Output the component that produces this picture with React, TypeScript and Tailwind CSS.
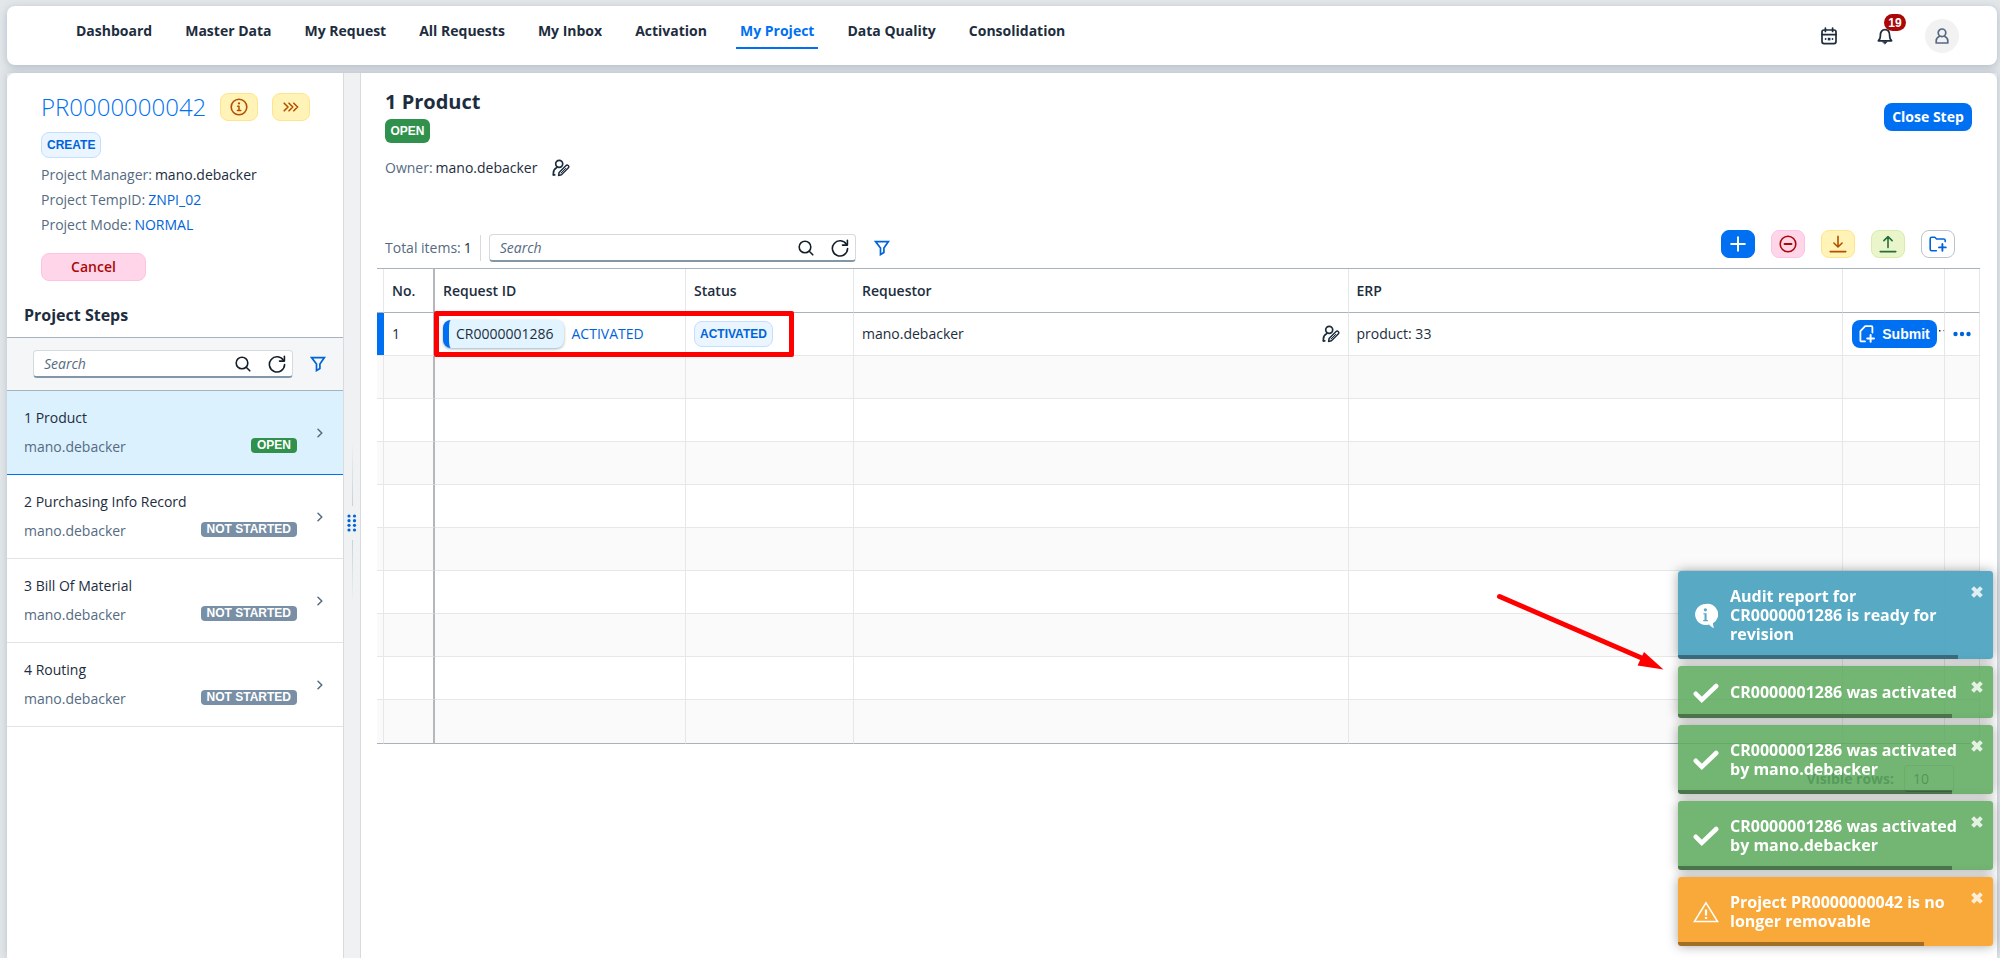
import React from "react";

type IconProps = { className?: string };

const stroke = {
  fill: "none",
  stroke: "currentColor",
  strokeWidth: 1.6,
  strokeLinecap: "round" as const,
  strokeLinejoin: "round" as const,
};

function SearchIcon({ className = "size-4" }: IconProps) {
  return (
    <svg viewBox="0 0 16 16" className={className} {...stroke}>
      <circle cx="7" cy="7" r="5.8" />
      <path d="M11.2 11.2l3.6 3.6" />
    </svg>
  );
}

function RefreshIcon({ className = "size-4.5" }: IconProps) {
  return (
    <svg viewBox="0 0 18 18" className={className} {...stroke}>
      <path d="M15.6 5.6A7.6 7.6 0 1 0 16.6 9.6" />
      <path d="M16.4 1.2v4.9h-4.9" />
    </svg>
  );
}

function FilterIcon({ className = "size-4" }: IconProps) {
  return (
    <svg viewBox="0 0 16 16" className={className} {...stroke} strokeLinejoin="miter" strokeWidth="1.7">
      <path d="M1.6 1.6h12.8L9.9 8v4.6L6.5 14.6V8z" />
    </svg>
  );
}

function InfoIcon() {
  return (
    <svg viewBox="0 0 18 18" className="size-4.5" {...stroke}>
      <circle cx="9" cy="9" r="7.8" />
      <path d="M7.6 8.2H9v4M7.4 12.4h3.4" strokeWidth="1.5" />
      <circle cx="9" cy="5.4" r="1.1" fill="currentColor" stroke="none" />
    </svg>
  );
}

function ChevronsIcon() {
  return (
    <svg viewBox="0 0 16 10" className="h-2.5 w-4" {...stroke}>
      <path d="M1.2 1.2L5 5 1.2 8.8M6 1.2L9.8 5 6 8.8M10.8 1.2L14.6 5l-3.8 3.8" />
    </svg>
  );
}

function UserEditIcon() {
  return (
    <svg viewBox="0 0 18 18" className="size-4.5" {...stroke} strokeWidth="1.7">
      <circle cx="7.2" cy="4.8" r="3.5" />
      <path d="M1.4 15.8v-1.9c0-2.3 1.2-4.2 3.2-5.2" />
      <path d="M1.400 15.800h1.400" />
      <path d="M6.600 16.400l.5-2.900 7-7a1.400 1.400 0 0 1 2 0l.3.3a1.400 1.400 0 0 1 0 2l-7 7z" strokeWidth="1.500" />
      <path d="M9 14l4.600-4.600" strokeWidth="1" />
    </svg>
  );
}

function CalendarIcon() {
  return (
    <svg viewBox="0 0 16 18" className="h-4.5 w-4" {...stroke} strokeWidth="1.700">
      <rect x="1" y="3" width="14" height="13.600" rx="2" />
      <path d="M4.400 1v3.400M11.600 1v3.400M1 7.600h14" />
      <rect x="6.800" y="10.800" width="2.600" height="2.600" fill="currentColor" stroke="none" />
      <circle cx="4.600" cy="12" r=".9" fill="currentColor" stroke="none" />
      <circle cx="11.500" cy="12" r=".9" fill="currentColor" stroke="none" />
    </svg>
  );
}

function BellIcon() {
  return (
    <svg viewBox="0 0 16 18" className="h-4.5 w-4" {...stroke} strokeWidth="1.700">
      <path d="M1.400 13.800c1.600-1.200 2-2.800 2-5.600 0-3.400 1.800-5.600 4.600-5.600s4.600 2.200 4.600 5.600c0 2.800.4 4.400 2 5.600z" />
      <path d="M5.800 14.800h4.400L8 17z" fill="currentColor" strokeWidth=".6" />
    </svg>
  );
}

function UserIcon() {
  return (
    <svg viewBox="0 0 14 16" className="h-4 w-3.5" {...stroke} strokeWidth="1.700">
      <circle cx="7" cy="4.800" r="3.800" />
      <path d="M4.600 8.200C2.600 9 1.200 10.600 1.200 12.800v2.200h11.600v-2.200c0-2.200-1.400-3.800-3.400-4.600" />
    </svg>
  );
}

function PlusIcon() {
  return (
    <svg viewBox="0 0 16 16" className="size-4" {...stroke} strokeWidth="2">
      <path d="M8 1.200v13.600M1.200 8h13.600" />
    </svg>
  );
}

function MinusCircleIcon() {
  return (
    <svg viewBox="0 0 18 18" className="size-4.5" {...stroke}>
      <circle cx="9" cy="9" r="7.800" />
      <path d="M5.500 9h7" strokeWidth="1.800" />
    </svg>
  );
}

function DownloadIcon() {
  return (
    <svg viewBox="0 0 18 18" className="size-4.5" {...stroke}>
      <path d="M9 1.200v10.600M4.900 8L9 12l4.100-4M1.200 16.600h15.600" />
    </svg>
  );
}

function UploadIcon() {
  return (
    <svg viewBox="0 0 18 18" className="size-4.5" {...stroke}>
      <path d="M9 12.600V1.600M4.900 5.600L9 1.600l4.100 4M1.200 16.600h15.600" />
    </svg>
  );
}

function FolderAddIcon() {
  return (
    <svg viewBox="0 0 18 16" className="h-4 w-4.5" {...stroke}>
      <path d="M7.400 14.800H2.800A1.600 1.600 0 0 1 1.200 13.200V2.800a1.600 1.600 0 0 1 1.600-1.600h3l1.800 1.800h7a1.600 1.600 0 0 1 1.600 1.600v1" />
      <path d="M13.400 8v6.800M10 11.400h6.800" strokeWidth="1.900" />
    </svg>
  );
}

function DocumentAddIcon() {
  return (
    <svg viewBox="0 0 16 18" className="h-4.5 w-4" {...stroke} strokeWidth="1.800">
      <path d="M6 16.400H2.400a1 1 0 0 1-1-1V6.200l4.800-5h6.200a1 1 0 0 1 1 1v5.400" />
      <path d="M11.600 10v6.800M8.200 13.400H15" strokeWidth="2" />
    </svg>
  );
}

function ChevronRightIcon() {
  return (
    <svg viewBox="0 0 6 10" className="h-2.5 w-1.5" {...stroke} strokeWidth="1.500">
      <path d="M1 1.200L4.800 5 1 8.800" />
    </svg>
  );
}

function InfoBubbleIcon() {
  return (
    <svg viewBox="0 0 24 26" className="h-6.5 w-6">
      <path
        d="M11.500 1a10.500 10.500 0 1 0 3.600 20.400c1.200 1.600 2.800 2.800 4.900 3.600-.8-1.600-1.100-3.200-1-4.700A10.500 10.500 0 0 0 11.500 1z"
        fill="#fff"
      />
      <circle cx="11.400" cy="6.800" r="1.600" fill="#59a9c4" />
      <path d="M9.300 10.200h3.300v6.900h1.300v1.100H9.200v-1.100h1.300v-5.800H9.300z" fill="#59a9c4" />
    </svg>
  );
}

function CheckIcon() {
  return (
    <svg viewBox="0 0 26 20" className="h-5 w-6.5" fill="none" stroke="#fff" strokeWidth="4.600" strokeLinecap="round">
      <path d="M2.800 10.800l6 6L23.200 3" />
    </svg>
  );
}

function WarningIcon() {
  return (
    <svg viewBox="0 0 26 22" className="h-5.5 w-6.5" fill="none" stroke="#fff" strokeWidth="1.500">
      <path d="M13 1.800L24.600 20.600H1.400z" />
      <path d="M13 8.600v6" strokeWidth="2.200" />
      <path d="M13 16v2" strokeWidth="2.200" />
    </svg>
  );
}

function CloseIcon() {
  return (
    <svg viewBox="0 0 12 12" className="size-3" fill="none" stroke="currentColor" strokeWidth="4">
      <path d="M1.600 1.600l8.800 8.800M10.400 1.600l-8.800 8.800" />
    </svg>
  );
}

const tabs = [
  "Dashboard",
  "Master Data",
  "My Request",
  "All Requests",
  "My Inbox",
  "Activation",
  "My Project",
  "Data Quality",
  "Consolidation",
];

const steps = [
  { title: "1 Product", owner: "mano.debacker", status: "OPEN" },
  { title: "2 Purchasing Info Record", owner: "mano.debacker", status: "NOT STARTED" },
  { title: "3 Bill Of Material", owner: "mano.debacker", status: "NOT STARTED" },
  { title: "4 Routing", owner: "mano.debacker", status: "NOT STARTED" },
];

type Toast = { kind: "info" | "success" | "warning"; text: string; progress: number };

const toasts: Toast[] = [
  { kind: "info", text: "Audit report for CR0000001286 is ready for revision", progress: 89 },
  { kind: "success", text: "CR0000001286 was activated", progress: 87 },
  { kind: "success", text: "CR0000001286 was activated by mano.debacker", progress: 87 },
  { kind: "success", text: "CR0000001286 was activated by mano.debacker", progress: 87 },
  { kind: "warning", text: "Project PR0000000042 is no longer removable", progress: 78 },
];

const toastColors = {
  info: "bg-[#4aa3bf]/92",
  success: "bg-[#5aa85a]/85",
  warning: "bg-[#f9a633]/97",
};

const toastIcons = { info: <InfoBubbleIcon />, success: <CheckIcon />, warning: <WarningIcon /> };

function Header() {
  return (
    <header className="flex h-[59px] shrink-0 items-start rounded-lg bg-white pr-[38px] pl-[65px] shadow-[0_2px_8px_rgba(85,107,130,0.35)]">
      <nav className="flex gap-[25px] text-sm font-bold">
        {tabs.map((tab) => (
          <a
            key={tab}
            href="#"
            className={
              tab === "My Project"
                ? "border-b-2 border-[#0070f2] px-1 pt-[15px] pb-[6px] text-[#0070f2]"
                : "border-b-2 border-transparent px-1 pt-[15px] pb-[6px]"
            }
          >
            {tab}
          </a>
        ))}
      </nav>
      <div className="ml-auto flex items-center pt-[13px]">
        <button aria-label="Calendar" className="mr-10">
          <CalendarIcon />
        </button>
        <button aria-label="Notifications" className="relative mr-8">
          <BellIcon />
          <span className="absolute -top-[13px] left-[7px] flex h-[17px] w-[22px] items-center justify-center rounded-full bg-[#aa0808] font-['Liberation_Sans',sans-serif] text-xs font-bold text-white">
            19
          </span>
        </button>
        <button
          aria-label="Profile"
          className="flex size-[34px] items-center justify-center rounded-full bg-[#f2f2f2] text-[#556b82]"
        >
          <UserIcon />
        </button>
      </div>
    </header>
  );
}

function SearchField({ id, className }: { id: string; className: string }) {
  return (
    <div
      className={`flex h-7 items-center rounded-[4px] border border-b-2 border-[#d5dade] border-b-[#8396a8] bg-white pr-[6px] text-[#131e29] ${className}`}
    >
      <input
        id={id}
        type="text"
        aria-label="Search"
        placeholder="Search"
        className="min-w-0 grow bg-transparent pl-[10px] text-sm outline-none placeholder:text-[#556b82] placeholder:italic"
      />
      <button aria-label="Run search">
        <SearchIcon />
      </button>
      <button aria-label="Refresh" className="ml-[17px]">
        <RefreshIcon />
      </button>
    </div>
  );
}

function Sidebar() {
  return (
    <aside className="flex w-[337px] shrink-0 flex-col rounded-tl-lg border-r border-[#d9dcdf] bg-white">
      <div className="flex flex-col items-start pt-[18px] pl-[34px] text-sm">
        <div className="flex items-center">
          <a href="#" className="text-2xl font-light text-[#0070f2]">
            PR0000000042
          </a>
          <button
            aria-label="Project information"
            className="ml-[14px] flex h-7 w-[38px] items-center justify-center rounded-lg border border-[#ffe58a] bg-[#fff3b8] text-[#b44f00]"
          >
            <InfoIcon />
          </button>
          <button
            aria-label="Show more"
            className="ml-[14px] flex h-7 w-[38px] items-center justify-center rounded-lg border border-[#ffe58a] bg-[#fff3b8] text-[#b44f00]"
          >
            <ChevronsIcon />
          </button>
        </div>
        <span className="mt-[9px] flex h-[26px] items-center rounded-lg border border-[#c2dfff] bg-[#ebf5ff] px-[5px] font-['Liberation_Sans',sans-serif] text-xs font-bold text-[#0064d9]">
          CREATE
        </span>
        <dl className="mt-1 text-[#556b82]">
          <div className="flex h-[25px] items-center gap-[3px]">
            <dt>Project Manager:</dt>
            <dd className="text-[#1d2d3e]">mano.debacker</dd>
          </div>
          <div className="flex h-[25px] items-center gap-[3px]">
            <dt>Project TempID:</dt>
            <dd>
              <a href="#" className="text-[#0064d9]">ZNPI_02</a>
            </dd>
          </div>
          <div className="flex h-[25px] items-center gap-[3px]">
            <dt>Project Mode:</dt>
            <dd>
              <a href="#" className="text-[#0064d9]">NORMAL</a>
            </dd>
          </div>
        </dl>
        <button className="mt-4 h-7 w-[105px] rounded-lg border border-[#ffc2e0] bg-[#ffd6e9] font-semibold text-[#aa0808]">
          Cancel
        </button>
      </div>
      <h2 className="mt-[22px] pb-[10px] pl-[17px] text-base leading-6 font-bold">Project Steps</h2>
      <div className="flex h-[54px] items-center border-y border-[#a8b3bd] bg-[#f5f6f7] pl-[26px]">
        <SearchField id="step-search" className="w-[260px]" />
        <button aria-label="Filter steps" className="ml-[17px] text-[#0064d9]">
          <FilterIcon />
        </button>
      </div>
      <ul>
        {steps.map((step, i) => (
          <li
            key={step.title}
            className={
              i === 0
                ? "flex h-[84px] items-center border-b border-[#0070f2] bg-[#dcf1fe] pr-[20px] pl-[17px] text-sm"
                : "flex h-[84px] items-center border-b border-[#e1e4e6] pr-[20px] pl-[17px] text-sm"
            }
          >
            <div className="grow">
              <p className="mb-[9px]">{step.title}</p>
              <div className="flex items-start justify-between pr-5 text-[#556b82]">
                <span>{step.owner}</span>
                <span
                  className={`mt-px rounded-[4px] px-[6px] font-['Liberation_Sans',sans-serif] text-xs leading-[15px] font-bold text-white ${
                    step.status === "OPEN" ? "bg-[#30914c]" : "bg-[#788fa6]"
                  }`}
                >
                  {step.status}
                </span>
              </div>
            </div>
            <span className="text-[#556b82]">
              <ChevronRightIcon />
            </span>
          </li>
        ))}
      </ul>
    </aside>
  );
}

function Splitter() {
  return (
    <div className="flex w-4 shrink-0 flex-col items-center bg-[#eff1f2] pt-[369px]">
      <div className="h-16 w-px bg-linear-to-b from-transparent to-[#ccd1d6]" />
      <svg viewBox="0 0 10 18" className="my-2 h-4.5 w-2.5 fill-[#0064d9]">
        {[2, 6.7, 11.3, 16].map((y) => (
          <g key={y}>
            <circle cx="2" cy={y} r="1.600" />
            <circle cx="7.500" cy={y} r="1.600" />
          </g>
        ))}
      </svg>
      <div className="h-16 w-px bg-linear-to-b from-[#ccd1d6] to-transparent" />
    </div>
  );
}

const headCell = "border-r border-b border-r-[#e5e7e9] border-b-[#a8b3bd] px-2 text-left font-semibold";
const cell = "border-r border-b border-[#e5e7e9] px-2";

function RequestTable() {
  return (
    <table className="mt-[6px] w-full table-fixed border-separate border-spacing-0 border-t border-[#a8b3bd] text-sm">
      <colgroup>
        <col className="w-[7px]" />
        <col className="w-[51px]" />
        <col className="w-[251px]" />
        <col className="w-[168px]" />
        <col />
        <col />
        <col className="w-[102px]" />
        <col className="w-[35px]" />
      </colgroup>
      <thead>
        <tr className="h-[44px]">
          <th className="border-r border-b border-r-[#e5e7e9] border-b-[#a8b3bd] p-0" />
          <th className="border-r-2 border-b border-r-[#b4b8bb] border-b-[#a8b3bd] px-2 text-left font-semibold">No.</th>
          <th className={headCell}>Request ID</th>
          <th className={headCell}>Status</th>
          <th className={headCell}>Requestor</th>
          <th className={headCell}>ERP</th>
          <th className={headCell} />
          <th className={headCell} />
        </tr>
      </thead>
      <tbody>
        <tr className="h-[43px]">
          <td className="border-b border-[#e5e7e9] bg-[#0070f2] bg-clip-padding p-0" />
          <td className="border-r-2 border-b border-r-[#b4b8bb] border-b-[#e5e7e9] px-2">1</td>
          <td className={cell}>
            <div className="relative flex items-center">
              <span className="flex h-7 items-center overflow-hidden rounded-lg border-l-6 border-[#0070f2] bg-[#e1f4ff] pr-[10px] pl-[7px] shadow-[0_1px_3px_rgba(34,53,72,0.4)]">
                CR0000001286
              </span>
              <a href="#" className="ml-2 text-[#0064d9]">
                ACTIVATED
              </a>
              <span className="pointer-events-none absolute -top-[9px] -left-[9px] z-10 h-[46px] w-[360px] rounded-[2px] border-5 border-[#ff0000]" />
            </div>
          </td>
          <td className={cell}>
            <span className="inline-flex h-[26px] items-center rounded-lg border border-[#c2dfff] bg-[#ebf5ff] px-[5px] align-middle font-['Liberation_Sans',sans-serif] text-xs font-bold text-[#0064d9]">
              ACTIVATED
            </span>
          </td>
          <td className={cell}>
            <div className="flex items-center justify-between">
              <span>mano.debacker</span>
              <button aria-label="Change requestor">
                <UserEditIcon />
              </button>
            </div>
          </td>
          <td className={cell}>product: 33</td>
          <td className="border-r border-b border-[#e5e7e9] pl-[9px]">
            <div className="flex items-center">
              <button className="flex h-7 w-[85px] shrink-0 items-center justify-center gap-[7px] rounded-lg bg-[#0070f2] font-['Liberation_Sans',sans-serif] font-bold text-white">
                <DocumentAddIcon />
                Submit
              </button>
              <svg viewBox="0 0 6 10" className="ml-0.5 h-2.5 w-1.5 shrink-0 fill-[#1d2d3e]">
                <rect x="0" y="1" width="1.500" height="1.500" />
                <rect x="4" y="1" width="1.200" height="1.200" opacity=".5" />
              </svg>
            </div>
          </td>
          <td className={cell}>
            <button aria-label="More actions" className="flex items-center">
              <svg viewBox="0 0 18 6" className="h-1.5 w-4.5 fill-[#0064d9]">
                <circle cx="2.500" cy="3" r="2.200" />
                <circle cx="9" cy="3" r="2.200" />
                <circle cx="15.500" cy="3" r="2.200" />
              </svg>
            </button>
          </td>
        </tr>
        {Array.from({ length: 9 }, (_, i) => (
          <tr
            key={i}
            className="h-[43px] odd:bg-white even:bg-[#fafafa] last:h-[44px] last:[&>td]:border-b-[#a8b3bd]"
          >
            <td className="border-r border-b border-[#e5e7e9] p-0" />
            <td className="border-r-2 border-b border-r-[#b4b8bb] border-b-[#e5e7e9]" />
            <td className={cell} />
            <td className={cell} />
            <td className={cell} />
            <td className={cell} />
            <td className={cell} />
            <td className={cell} />
          </tr>
        ))}
      </tbody>
    </table>
  );
}

const toolButton = "flex h-7 w-[34px] items-center justify-center rounded-lg border";

function Main() {
  return (
    <main className="min-w-0 grow rounded-tr-lg border-l border-[#d9dcdf] bg-white pr-[17px] pl-4">
      <div className="flex items-start justify-between pt-[15px] pr-2 pl-2">
        <div>
          <h1 className="text-xl font-bold">1 Product</h1>
          <span className="mt-[3px] flex h-6 w-[45px] items-center justify-center rounded-md bg-[#30914c] font-['Liberation_Sans',sans-serif] text-xs font-bold text-white">
            OPEN
          </span>
          <p className="mt-[15px] flex items-center gap-[3px] text-sm">
            <span className="text-[#556b82]">Owner:</span>
            <span>mano.debacker</span>
            <button aria-label="Change owner" className="ml-3">
              <UserEditIcon />
            </button>
          </p>
        </div>
        <button className="mt-[15px] h-7 w-[88px] rounded-lg bg-[#0070f2] text-sm font-bold text-white">Close Step</button>
      </div>
      <div className="mt-[52px] flex items-start pl-2 text-sm">
        <div className="mt-1 flex items-center">
          <p className="flex gap-[3px] pr-2">
            <span className="text-[#556b82]">Total items:</span>
            <span>1</span>
          </p>
          <div className="mr-2 h-[26px] w-px bg-[#d9dcdf]" />
          <SearchField id="item-search" className="w-[367px]" />
          <button aria-label="Filter items" className="ml-[18px] text-[#0064d9]">
            <FilterIcon />
          </button>
        </div>
        <div className="mr-[25px] ml-auto flex gap-4">
          <button aria-label="Add" className={`${toolButton} border-[#0070f2] bg-[#0070f2] text-white`}>
            <PlusIcon />
          </button>
          <button aria-label="Remove" className={`${toolButton} border-[#ffc2e0] bg-[#ffd6e9] text-[#aa0808]`}>
            <MinusCircleIcon />
          </button>
          <button aria-label="Download" className={`${toolButton} border-[#ffe58a] bg-[#fff3b8] text-[#b44f00]`}>
            <DownloadIcon />
          </button>
          <button aria-label="Upload" className={`${toolButton} border-[#d8eda8] bg-[#ebf5cb] text-[#256f3a]`}>
            <UploadIcon />
          </button>
          <button aria-label="Add folder" className={`${toolButton} border-[#bcc3ca] bg-white text-[#0064d9]`}>
            <FolderAddIcon />
          </button>
        </div>
      </div>
      <RequestTable />
      <div className="mt-[21px] flex items-center justify-end gap-[10px] pr-[26px] text-sm">
        <label htmlFor="visible-rows" className="font-bold text-[#3f5368]">
          Visible rows:
        </label>
        <input
          id="visible-rows"
          type="text"
          defaultValue="10"
          className="h-[27px] w-[50px] rounded-[4px] border border-[#c3cad1] border-b-[#2c3e50] px-2"
        />
      </div>
    </main>
  );
}

function Toasts() {
  return (
    <div className="fixed right-[7px] bottom-3 z-20 flex w-[315px] flex-col gap-[7px]">
      {toasts.map((toast, i) => (
        <div
          key={i}
          role="status"
          className={`relative flex min-h-[52px] items-center overflow-hidden rounded-[3px] pt-4 pr-[15px] pb-[15px] pl-[15px] text-base leading-[19px] font-bold text-white shadow-[0_0_12px_rgba(0,0,0,0.35)] ${toastColors[toast.kind]}`}
        >
          <span className="flex w-[26px] shrink-0 justify-center">{toastIcons[toast.kind]}</span>
          <p className="ml-[11px] w-[232px] shrink-0">{toast.text}</p>
          <button aria-label="Dismiss" className="absolute top-[15px] right-[10px] text-white/80">
            <CloseIcon />
          </button>
          <div className="absolute bottom-0 left-0 h-1 bg-black/35" style={{ width: `${toast.progress}%` }} />
        </div>
      ))}
      <svg viewBox="0 0 170 80" className="pointer-events-none absolute top-[21px] -left-[182px] h-20 w-[170px]">
        <path d="M3.500 4.500L148 67" stroke="#ff0000" strokeWidth="5" strokeLinecap="round" />
        <path d="M148 60l19.500 17.500-26-4z" fill="#ff0000" />
      </svg>
    </div>
  );
}

export default function App() {
  return (
    <div className="flex min-h-screen flex-col gap-2 bg-[#e3e7ea] pt-[6px] pr-[3px] pl-[7px] font-['Open_Sans','Noto_Sans',sans-serif] text-[#1d2d3e]">
      <Header />
      <div className="flex grow shadow-[0_0_8px_rgba(85,107,130,0.3)]">
        <Sidebar />
        <Splitter />
        <Main />
      </div>
      <Toasts />
    </div>
  );
}
